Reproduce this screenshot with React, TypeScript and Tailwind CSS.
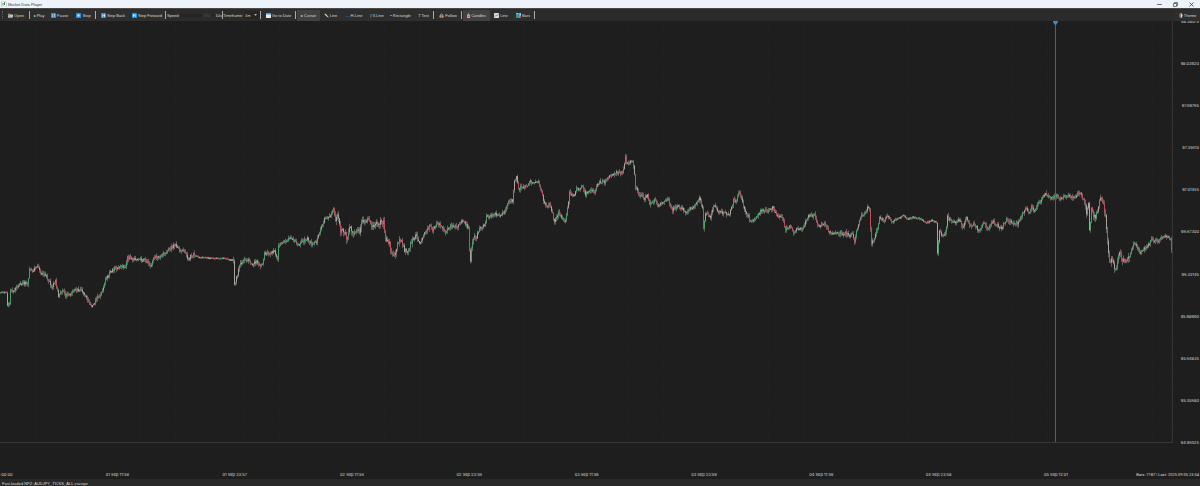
import React, { useState } from 'react';

type Point = [number, number];

const TOP = 21;
const PLOT_W = 1172;
const PLOT_H = 421;

// price path, one entry per swing
const path: Point[] = [
    [0, 292], [7, 292], [8, 304], [10, 303], [11, 289], [14, 290], [22, 283], [28, 283], [30, 270], [34, 270], [38, 266], [41, 273], [46, 276], [50, 280], [52, 288],
    [56, 281], [59, 296], [63, 290], [66, 296], [71, 294], [76, 289], [83, 291], [88, 299], [92, 306], [98, 297], [100, 298], [106, 280], [111, 271],
    [120, 266], [126, 268], [128, 257], [136, 260], [146, 260], [152, 266], [154, 257], [160, 257], [166, 252], [174, 246], [176, 244], [180, 250],
    [185, 251], [189, 260], [192, 254], [200, 257], [215, 258], [225, 258], [234, 260], [235, 285], [237, 277], [241, 263], [247, 259], [252, 264],
    [257, 262], [260, 266], [263, 264], [265, 254], [275, 252], [278, 258], [279, 245], [285, 242], [292, 237], [298, 245], [304, 241], [308, 238],
    [312, 244], [317, 241], [320, 232], [325, 219], [330, 216], [334, 209], [336, 223], [338, 214], [341, 232], [346, 230], [347, 242], [350, 227],
    [354, 233], [360, 231], [362, 221], [368, 219], [373, 226], [378, 223], [384, 222], [386, 240], [390, 241], [391, 252], [396, 253], [400, 237],
    [405, 250], [408, 253], [412, 241], [417, 234], [420, 244], [428, 228], [431, 226], [433, 231], [438, 222], [442, 227], [446, 232], [451, 226],
    [458, 226], [464, 221], [469, 228], [470, 250], [471, 262], [472, 248], [474, 237], [477, 237], [480, 228], [485, 225], [487, 216], [495, 214],
    [499, 214], [502, 216], [506, 208], [509, 200], [513, 201], [515, 182], [517, 175], [519, 190], [522, 186], [527, 187], [530, 181], [534, 184],
    [537, 181], [541, 188], [544, 200], [547, 205], [550, 204], [555, 221], [559, 213], [563, 219], [566, 222], [570, 193], [575, 194], [577, 188],
    [583, 187], [586, 195], [589, 190], [595, 192], [600, 181], [605, 182], [608, 177], [613, 174], [620, 172], [623, 173], [626, 158], [628, 164],
    [632, 160], [634, 164], [636, 187], [640, 194], [645, 198], [648, 195], [650, 204], [655, 200], [658, 206], [662, 203], [668, 198], [673, 210],
    [678, 206], [687, 212], [695, 205], [700, 199], [703, 207], [704, 230], [706, 213], [711, 217], [714, 205], [720, 212], [730, 214], [734, 200],
    [736, 203], [740, 192], [744, 206], [751, 221], [758, 216], [762, 210], [768, 211], [773, 208], [778, 215], [783, 218], [786, 230], [790, 226],
    [794, 233], [798, 227], [802, 230], [810, 215], [815, 215], [818, 226], [824, 223], [830, 232], [845, 233], [851, 235], [853, 234], [855, 242],
    [857, 230], [861, 217], [866, 213], [868, 207], [870, 210], [872, 244], [874, 240], [878, 228], [880, 216], [884, 222], [888, 215], [892, 220],
    [898, 219], [904, 215], [908, 219], [913, 217], [922, 219], [927, 223], [932, 220], [937, 222], [938, 252], [940, 230], [942, 234], [946, 233],
    [948, 217], [955, 223], [960, 220], [963, 228], [967, 216], [970, 226], [975, 224], [979, 230], [984, 223], [988, 228], [994, 222], [1002, 228],
    [1007, 219], [1012, 223], [1019, 223], [1026, 207], [1029, 212], [1032, 207], [1036, 210], [1038, 205], [1046, 193], [1053, 198], [1057, 195],
    [1060, 200], [1064, 196], [1075, 197], [1080, 192], [1085, 201], [1087, 212], [1089, 203], [1090, 232], [1092, 210], [1096, 219], [1100, 200],
    [1102, 197], [1106, 215], [1108, 240], [1110, 262], [1113, 258], [1116, 272], [1120, 252], [1123, 261], [1129, 259], [1134, 243], [1140, 251],
    [1146, 248], [1152, 240], [1160, 240], [1166, 235], [1171, 240], [1172, 250],
];

const prices = ['98.38075', '98.03920', '97.69765', '97.35610', '97.01455', '96.67300', '96.33145', '95.98990', '95.64835', '95.30680', '94.96525'];
const times = ['01 Sep 00:00', '01 Sep 11:58', '01 Sep 23:57', '02 Sep 11:56', '02 Sep 23:56', '03 Sep 11:59', '03 Sep 23:59', '04 Sep 11:59', '04 Sep 23:58', '05 Sep 12:01'];

const rand = (n: number) => {
    const v = Math.sin(n * 127.1 + 11.7) * 43758.5453;
    return v - Math.floor(v);
};

const priceAt = (x: number) => {
    const i = Math.max(1, path.findIndex((p) => p[0] >= x));
    const [x0, y0] = path[i - 1];
    const [x1, y1] = path[i];
    return y0 + ((y1 - y0) * (x - x0)) / (x1 - x0) - TOP;
};

// how much a session jitters
const noiseAt = (x: number) => {
    if (x < 7 || (x > 195 && x < 233)) return 0.8;
    if (x > 895 && x < 937) return 1.5;
    if ((x > 334 && x < 420) || (x > 1084 && x < 1130)) return 5;
    return 3.4;
};

const candles = Array.from({ length: PLOT_W }, (_, x) => {
    const noise = noiseAt(x);
    const open = priceAt(x) + (rand(x) - 0.5) * noise;
    const close = priceAt(Math.min(x + 1, PLOT_W)) + (rand(x + 1) - 0.5) * noise;
    const top = Math.min(open, close);
    const bottom = Math.max(open, close);
    const r = rand(x + 5000);
    const fill = r > 0.7 ? '#b4b1a8' : close < open ? '#3fae69' : '#d04a5c';
    return {
        x,
        fill,
        top,
        h: Math.max(1.4, bottom - top),
        high: top - rand(x + 900) * noise * 0.8,
        low: bottom + 0.5 + rand(x + 1700) * noise * 0.8,
    };
});

function Chart() {
    return (
        <svg className="block h-full w-full" viewBox={`0 0 ${PLOT_W} ${PLOT_H}`} preserveAspectRatio="none">
            {Array.from({ length: 33 }, (_, i) => (
                <path key={i} d={`M${Math.round((i + 1) * 34.9) + 0.5} 0V${PLOT_H}`} stroke="#212121" strokeDasharray="2 1" />
            ))}
            {Array.from({ length: 23 }, (_, i) => (
                <path key={i} d={`M0 ${Math.round((i + 1) * 17.5) + 0.5}H${PLOT_W}`} stroke="#202020" strokeDasharray="2 1" />
            ))}
            {candles.map((c) => (
                <g key={c.x}>
                    <rect x={c.x} y={c.high} width="1" height={c.low - c.high} fill="#858480" opacity="0.65" />
                    <rect x={c.x} y={c.top} width="1" height={c.h} fill={c.fill} opacity="0.85" />
                </g>
            ))}
            <path d={`M1055.5 0V${PLOT_H}`} stroke="#256fa3" />
            <path d="M1053 0h5v1l-2 3h-1l-2-3z" fill="#2f8fd6" />
        </svg>
    );
}

const Sep = () => <span className="h-2 w-px shrink-0 bg-[#aaa9a2]" />;

interface ToolProps {
    label: string;
    className: string;
    active?: boolean;
    icon?: React.ReactNode;
    onClick?: () => void;
}

function Tool({ label, className, active, icon, onClick }: ToolProps) {
    return (
        <button
            type="button"
            onClick={onClick}
            className={`flex h-[11px] shrink-0 items-center justify-center gap-px whitespace-nowrap ${active ? 'bg-[#414141]' : 'bg-[#2e2e2e]'} ${className}`}
        >
            {icon}
            {label}
        </button>
    );
}

const Blue = ({ d }: { d: string }) => (
    <svg className="size-[5px] shrink-0" viewBox="0 0 10 10">
        <rect width="10" height="10" rx="1" fill="#2094e8" />
        <path d={d} fill="#e9f4ff" />
    </svg>
);

const Folder = () => (
    <svg className="size-[5px] shrink-0" viewBox="0 0 10 10">
        <path d="M0 1h4l1 1h4v7H0z" fill="#8f8580" />
        <path d="M1 4h9L9 9H0z" fill="#d6c9bf" />
        <path d="M2 5h3v2H2z" fill="#bd7066" />
    </svg>
);

const Calendar = () => (
    <svg className="size-[5px] shrink-0" viewBox="0 0 10 10">
        <rect width="10" height="10" rx="1" fill="#e6edf2" />
        <path d="M0 0h10v3H0z" fill="#3c9ce0" />
    </svg>
);

const Pencil = () => (
    <svg className="size-[5px] shrink-0" viewBox="0 0 10 10">
        <path d="M1 1l3 1 5 6v1H8L2 4z" fill="#d8d5cd" />
    </svg>
);

const Lock = () => (
    <svg className="size-[5px] shrink-0" viewBox="0 0 10 10">
        <path d="M3 5V3q2-3 4 0v2" fill="none" stroke="#b9b5ae" strokeWidth="1.5" />
        <path d="M1 5h8v4H1z" fill="#c7b8aa" />
        <path d="M3 6h4v2H3z" fill="#b75f55" />
    </svg>
);

const Candle = () => (
    <svg className="h-[5px] w-[3px] shrink-0" viewBox="0 0 6 10">
        <path d="M2.5 0h1v3h2v7h-5V3h2z" fill="#d8cabc" />
        <path d="M2 5h2v3H2z" fill="#a94e45" />
    </svg>
);

const LineChart = () => (
    <svg className="size-[5px] shrink-0" viewBox="0 0 10 10">
        <rect width="10" height="10" rx="1" fill="#d7dad3" />
        <path d="M1 8l3-4 2 2 3-4" fill="none" stroke="#847f7a" strokeWidth="1.3" />
    </svg>
);

const BarChart = () => (
    <svg className="size-[5px] shrink-0" viewBox="0 0 10 10">
        <rect width="10" height="10" rx="1" fill="#9fd0e6" />
        <path d="M0 2h4v8H0z" fill="#28a376" />
        <path d="M4 0h3v10H4z" fill="#238bd8" />
        <path d="M7 5h3v5H7z" fill="#cf4f4f" />
    </svg>
);

const Palette = () => (
    <svg className="size-[5px] shrink-0" viewBox="0 0 10 10">
        <path d="M5 0q4 0 4 5t-4 5z" fill="#e2ded5" />
        <path d="M5 0Q2 0 2 5t3 5z" fill="#a64f50" />
    </svg>
);

export default function App() {
    const [tool, setTool] = useState('Cursor');
    const [style, setStyle] = useState('Candles');

    return (
        <div className="flex min-h-screen flex-col overflow-hidden bg-[#1e1e1e] font-['Liberation_Sans',sans-serif] text-[4px] leading-[5px] text-[#dddbd3]">
            <header className="flex h-2 items-center bg-[#eef3f9] text-[#333]">
                <svg className="mx-px size-[6px]" viewBox="0 0 12 12">
                    <path d="M1 0h7l3 3v9H1z" fill="#fff" stroke="#9ca8a3" />
                    <path d="M3 4h2v5H3zM6 2h2v6H6z" fill="#348c5c" />
                </svg>
                <h1>Market Data Player</h1>
                <div className="ml-auto flex items-center gap-[11px] pr-[6px]">
                    <button type="button" aria-label="Minimize">
                        <svg className="size-[5px]" viewBox="0 0 5 5"><path d="M0 2.5h5" stroke="#555" strokeWidth=".8" /></svg>
                    </button>
                    <button type="button" aria-label="Restore">
                        <svg className="size-[5px]" viewBox="0 0 5 5" fill="none" stroke="#444" strokeWidth=".7"><path d="M.5 1.5h3v3h-3zM1.5 1.5V.5h3v3h-1" /></svg>
                    </button>
                    <button type="button" aria-label="Close">
                        <svg className="size-[5px]" viewBox="0 0 5 5"><path d="M.5.5l4 4M4.5.5l-4 4" stroke="#333" strokeWidth=".8" /></svg>
                    </button>
                </div>
            </header>

            <nav className="relative z-10 flex h-[13px] items-center border-t border-[#4a4a4a] bg-[#2b2b2b]">
                <span className="ml-[2px] h-2 w-px border-r border-dotted border-[#666]" />
                <Tool label="Open" className="ml-[3px] w-5" icon={<Folder />} />
                <span className="w-[3px]" /><Sep />
                <Tool label="▸ Play" className="ml-px w-4" />
                <Tool label="Pause" className="w-[25px]" icon={<Blue d="M3 2h1v6H3zM6 2h1v6H6z" />} />
                <Tool label="Stop" className="w-[23px]" icon={<Blue d="M3 3h4v4H3z" />} />
                <Sep />
                <Tool label="Step Back" className="ml-px w-8" icon={<Blue d="M2 2h1v6H2zM8 2v6L4 5z" />} />
                <Tool label="Step Forward" className="w-9" icon={<Blue d="M7 2h1v6H7zM2 2v6l4-3z" />} />
                <Sep />
                <label htmlFor="speed" className="ml-px w-[13px]">Speed:</label>
                <input
                    id="speed"
                    type="range"
                    min={1}
                    max={20}
                    defaultValue={18}
                    className="h-[3px] w-[34px] appearance-none bg-[#242424] [&::-webkit-slider-thumb]:h-[3px] [&::-webkit-slider-thumb]:w-2 [&::-webkit-slider-thumb]:appearance-none [&::-webkit-slider-thumb]:bg-[#363636]"
                />
                <span className="w-2 text-right">10x</span>
                <Sep />
                <label htmlFor="timeframe" className="w-[21px] whitespace-nowrap">Timeframe:</label>
                <div className="flex items-center bg-[#252525]">
                    <select id="timeframe" className="h-2 w-[10px] appearance-none pl-px" defaultValue="1m">
                        <option>1m</option>
                        <option>5m</option>
                        <option>1h</option>
                    </select>
                    <svg className="mr-[3px] h-[2px] w-[3px]" viewBox="0 0 3 2"><path d="M0 0h3L1.5 2z" fill="#aaa" /></svg>
                </div>
                <Sep />
                <Tool label="Go to Date" className="ml-px w-[33px]" icon={<Calendar />} />
                <Sep />
                <Tool label="▸ Cursor" className="ml-px w-[23px]" active={tool === 'Cursor'} onClick={() => setTool('Cursor')} />
                <Tool label="Line" className="w-[21px]" active={tool === 'Line'} onClick={() => setTool('Line')} icon={<Pencil />} />
                <Tool label="H-Line" className="w-[26px]" active={tool === 'H-Line'} onClick={() => setTool('H-Line')} icon={<span className="text-[#4c93c4]">—</span>} />
                <Tool label="| V-Line" className="w-5" active={tool === 'V-Line'} onClick={() => setTool('V-Line')} />
                <Tool label="▪ Rectangle" className="w-[27px]" active={tool === 'Rectangle'} onClick={() => setTool('Rectangle')} />
                <Tool label="T Text" className="w-[19px]" active={tool === 'Text'} onClick={() => setTool('Text')} />
                <Sep />
                <Tool label="Follow" className="ml-px w-[26px]" icon={<Lock />} />
                <Sep />
                <Tool label="Candles" className="ml-px w-[27px]" active={style === 'Candles'} onClick={() => setStyle('Candles')} icon={<Candle />} />
                <Tool label="Line" className="w-[22px]" active={style === 'Line'} onClick={() => setStyle('Line')} icon={<LineChart />} />
                <Tool label="Bars" className="w-[22px]" active={style === 'Bars'} onClick={() => setStyle('Bars')} icon={<BarChart />} />
                <Sep />
                <Tool label="Theme" className="ml-auto w-[26px]" icon={<Palette />} />
            </nav>

            <main className="grid flex-1 grid-cols-[1fr_27px] grid-rows-[1fr_36px]">
                <div className="h-full min-h-0 border-r border-b border-[#363636]">
                    <Chart />
                </div>
                <ul className="flex flex-col justify-between pr-px text-right font-['Inter',sans-serif]">
                    {prices.map((p) => (
                        <li key={p} className="flex h-0 items-center justify-end">{p}</li>
                    ))}
                </ul>
                <div className="col-span-2 flex items-end justify-between pb-[2px]">
                    <ol className="flex w-[88%] justify-between font-['Inter',sans-serif]">
                        {times.map((t) => (
                            <li key={t} className="flex w-0 justify-center whitespace-nowrap">{t}</li>
                        ))}
                    </ol>
                    <p className="pr-px whitespace-nowrap font-['Roboto',sans-serif]">Bars: 7187 | Last: 2025.09.05 23:54</p>
                </div>
            </main>

            <footer className="flex h-[9px] items-center bg-[#292929] pl-[2px]">Fast-loaded NPZ: AUDJPY_TICKS_ALL.csv.npz</footer>
        </div>
    );
}
